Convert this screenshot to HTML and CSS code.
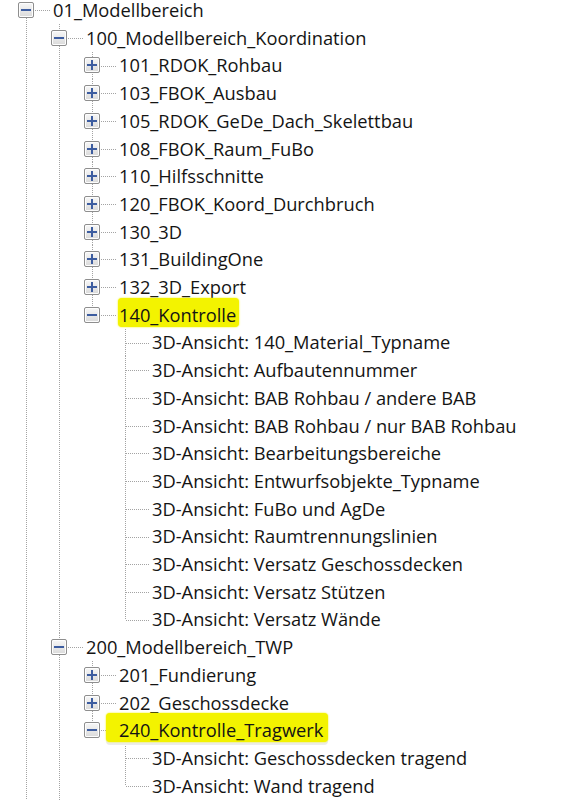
FILE: index.html
```html
<!DOCTYPE html>
<html>
<head lang="de">
    <meta charset="UTF-8">
    <title>Projektbrowser</title>
    <link rel="stylesheet" href="styles.css">
</head>
<body>
<ul class="tree">
    <li class="top">
        <div class="row"><span class="toggle open"></span><span class="label">01_Modellbereich</span></div>
        <ul>
            <li>
                <div class="row"><span class="toggle open"></span><span class="label">100_Modellbereich_Koordination</span></div>
                <ul>
                    <li><div class="row"><span class="toggle"></span><span class="label">101_RDOK_Rohbau</span></div></li>
                    <li><div class="row"><span class="toggle"></span><span class="label">103_FBOK_Ausbau</span></div></li>
                    <li><div class="row"><span class="toggle"></span><span class="label">105_RDOK_GeDe_Dach_Skelettbau</span></div></li>
                    <li><div class="row"><span class="toggle"></span><span class="label">108_FBOK_Raum_FuBo</span></div></li>
                    <li><div class="row"><span class="toggle"></span><span class="label">110_Hilfsschnitte</span></div></li>
                    <li><div class="row"><span class="toggle"></span><span class="label">120_FBOK_Koord_Durchbruch</span></div></li>
                    <li><div class="row"><span class="toggle"></span><span class="label">130_3D</span></div></li>
                    <li><div class="row"><span class="toggle"></span><span class="label">131_BuildingOne</span></div></li>
                    <li><div class="row"><span class="toggle"></span><span class="label">132_3D_Export</span></div></li>
                    <li>
                        <div class="row"><span class="toggle open"></span><span class="label mark">140_Kontrolle</span></div>
                        <ul>
                            <li><div class="row"><span class="label leaf">3D-Ansicht: 140_Material_Typname</span></div></li>
                            <li><div class="row"><span class="label leaf">3D-Ansicht: Aufbautennummer</span></div></li>
                            <li><div class="row"><span class="label leaf">3D-Ansicht: BAB Rohbau / andere BAB</span></div></li>
                            <li><div class="row"><span class="label leaf">3D-Ansicht: BAB Rohbau / nur BAB Rohbau</span></div></li>
                            <li><div class="row"><span class="label leaf">3D-Ansicht: Bearbeitungsbereiche</span></div></li>
                            <li><div class="row"><span class="label leaf">3D-Ansicht: Entwurfsobjekte_Typname</span></div></li>
                            <li><div class="row"><span class="label leaf">3D-Ansicht: FuBo und AgDe</span></div></li>
                            <li><div class="row"><span class="label leaf">3D-Ansicht: Raumtrennungslinien</span></div></li>
                            <li><div class="row"><span class="label leaf">3D-Ansicht: Versatz Geschossdecken</span></div></li>
                            <li><div class="row"><span class="label leaf">3D-Ansicht: Versatz Stützen</span></div></li>
                            <li><div class="row"><span class="label leaf">3D-Ansicht: Versatz Wände</span></div></li>
                        </ul>
                    </li>
                </ul>
            </li>
            <li class="more">
                <div class="row"><span class="toggle open"></span><span class="label">200_Modellbereich_TWP</span></div>
                <ul>
                    <li><div class="row"><span class="toggle"></span><span class="label">201_Fundierung</span></div></li>
                    <li><div class="row"><span class="toggle"></span><span class="label">202_Geschossdecke</span></div></li>
                    <li>
                        <div class="row"><span class="toggle open"></span><span class="label mark wide">240_Kontrolle_Tragwerk</span></div>
                        <ul>
                            <li><div class="row"><span class="label leaf">3D-Ansicht: Geschossdecken tragend</span></div></li>
                            <li><div class="row"><span class="label leaf">3D-Ansicht: Wand tragend</span></div></li>
                        </ul>
                    </li>
                </ul>
            </li>
        </ul>
    </li>
</ul>
</body>
</html>
```

FILE: styles.css
```css
*{
    margin: 0;
    padding: 0;
}
body{
    background: #fff;
    font-family: "Open Sans", "Noto Sans", sans-serif;
    font-size: 18.3px;
    color: #141414;
    overflow: hidden;
}
ul,li{
    list-style: none;
}
.tree{
    margin: -3.85px 0 0 18px;
}
.tree ul{
    padding-left: 33px;
}

/* vertical dotted line of the siblings */
.tree li{
    background: repeating-linear-gradient(to bottom, #a3a3a3 0 1px, transparent 1px 2px) 8px 0 / 1px 100% no-repeat;
}
.tree li:last-child{
    background-size: 1px 14px;
}
.tree li.top,
.tree li.more{
    background-position: 8px 14px;
    background-size: 1px 100%;
}
.tree li.more{
    background-position: 8px 0;
}

/* horizontal connector */
.row{
    display: flex;
    align-items: center;
    height: 27.71px;
    background: repeating-linear-gradient(to right, #a3a3a3 0 1px, transparent 1px 2px) 9px 14px / 23px 1px no-repeat;
}
.toggle{
    width: 16px;
    height: 16px;
    box-sizing: border-box;
    margin-right: 19px;
    border: 1px solid #8e8e8e;
    border-radius: 2px;
    background: linear-gradient(#f7f7f7, #dadada);
    box-shadow: inset 0 0 0 1px #fdfdfd;
    display: flex;
    align-items: center;
    justify-content: center;
    position: relative;
}
.toggle::before{
    content: "";
    width: 10px;
    height: 2px;
    background: #3d5da0;
}
.toggle::after{
    content: "";
    position: absolute;
    left: 6px;
    top: 2px;
    width: 2px;
    height: 10px;
    background: #3d5da0;
}
.toggle.open::after{
    display: none;
}
.label{
    line-height: 20px;
    white-space: nowrap;
}
.label.leaf{
    margin-left: 35px;
}
.label.mark{
    background: #f3f300;
    border-radius: 4px;
    padding: 7px 3px 2px 1px;
    margin: 0 0 5px -1px;
    box-shadow: 0 0 2px #f3f300;
}
.label.mark.wide{
    padding-left: 13px;
    margin-left: -13px;
    padding-right: 5px;
    box-shadow: 0 0 2px #f3f300, 0 3px 0 #ececec;
}
```
